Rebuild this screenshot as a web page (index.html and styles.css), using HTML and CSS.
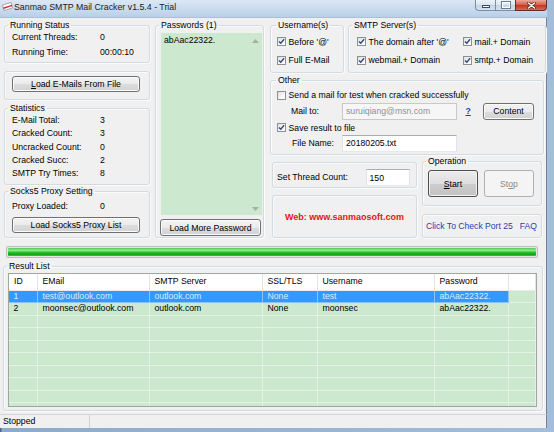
FILE: index.html
```html
<!DOCTYPE html>
<html>
<head>
<meta charset="utf-8">
<title>Sanmao SMTP Mail Cracker</title>
<link rel="stylesheet" href="styles.css">
</head>
<body>
<svg class="defs" width="0" height="0" aria-hidden="true">
  <defs>
    <symbol id="tick" viewBox="0 0 7 7"><path d="M1 3.4 L2.8 5.3 L6.1 1.2" fill="none" stroke="#2f4a7e" stroke-width="1.4"/></symbol>
  </defs>
</svg>
<div class="window">
  <div class="titlebar">
    <svg class="appicon" width="11" height="9" viewBox="0 0 11 9"><path d="M0.5 3 L9 0.5 L10.5 6 L2 8.5 Z" fill="#fff" stroke="#8a8a8a" stroke-width="0.7"/><path d="M1.2 5.4 L10 2.7 L10.3 4.1 L1.6 6.9 Z" fill="#d42a2a"/></svg>
    <span class="title">Sanmao SMTP Mail Cracker v1.5.4 - Trial</span>
    <div class="caption">
      <span class="cbtn min"><span class="g-min"></span></span>
      <span class="cbtn max"><span class="g-max"></span></span>
      <span class="cbtn close"><svg width="9" height="7" viewBox="0 0 9 7"><path d="M1.5 1 L7.5 6 M7.5 1 L1.5 6" stroke="#5a1f1a" stroke-width="2.8" stroke-linecap="round"/><path d="M1.5 1 L7.5 6 M7.5 1 L1.5 6" stroke="#fff" stroke-width="1.5" stroke-linecap="round"/></svg></span>
    </div>
  </div>
  <div class="client">
    <div class="top">
      <div class="col-left">
        <fieldset class="grp running">
          <legend>Running Status</legend>
          <div class="kv r145"><span class="k">Current Threads:</span><span>0</span></div>
          <div class="kv r145"><span class="k">Running Time:</span><span>00:00:10</span></div>
        </fieldset>
        <div class="box loadbox"><button class="btn wide"><u>L</u>oad E-Mails From File</button></div>
        <fieldset class="grp stats">
          <legend>Statistics</legend>
          <div class="statrows">
            <div class="kv r134"><span class="k">E-Mail Total:</span><span>3</span></div>
            <div class="kv r134"><span class="k">Cracked Count:</span><span>3</span></div>
            <div class="kv r134"><span class="k">Uncracked Count:</span><span>0</span></div>
            <div class="kv r134"><span class="k">Cracked Succ:</span><span>2</span></div>
            <div class="kv r134"><span class="k">SMTP Try Times:</span><span>8</span></div>
          </div>
        </fieldset>
        <fieldset class="grp socks">
          <legend>Socks5 Proxy Setting</legend>
          <div class="kv r14 proxyrow"><span class="k">Proxy Loaded:</span><span>0</span></div>
          <button class="btn wide proxybtn">Load Socks5 Proxy List</button>
        </fieldset>
      </div>

      <fieldset class="grp passwords">
        <legend>Passwords (1)</legend>
        <div class="pwlist">
          <div class="pwtext">abAac22322.</div>
          <div class="vscroll">
            <svg width="7" height="4" viewBox="0 0 7 4"><path d="M0 4 L3.5 0 L7 4 Z" fill="#a8aea8"/></svg>
            <svg width="7" height="4" viewBox="0 0 7 4"><path d="M0 0 L3.5 4 L7 0 Z" fill="#a8aea8"/></svg>
          </div>
        </div>
        <button class="btn pwbtn">Load More Password</button>
      </fieldset>

      <div class="col-right">
        <div class="row-top">
          <fieldset class="grp user">
            <legend>Username(s)</legend>
            <div class="chkrows">
              <div class="chk"><span class="cb"><svg><use href="#tick"/></svg></span><span>Before '@'</span></div>
              <div class="chk"><span class="cb"><svg><use href="#tick"/></svg></span><span>Full E-Mail</span></div>
            </div>
          </fieldset>
          <fieldset class="grp smtp">
            <legend>SMTP Server(s)</legend>
            <div class="chkgrid">
              <div class="chk"><span class="cb"><svg><use href="#tick"/></svg></span><span>The domain after '@'</span></div>
              <div class="chk"><span class="cb"><svg><use href="#tick"/></svg></span><span>mail.+ Domain</span></div>
              <div class="chk"><span class="cb"><svg><use href="#tick"/></svg></span><span>webmail.+ Domain</span></div>
              <div class="chk"><span class="cb"><svg><use href="#tick"/></svg></span><span>smtp.+ Domain</span></div>
            </div>
          </fieldset>
        </div>

        <fieldset class="grp other">
          <legend>Other</legend>
          <div class="chk sendrow"><span class="cb off"></span><span>Send a mail for test when cracked successfully</span></div>
          <div class="field mailrow">
            <span class="flabel">Mail to:</span>
            <span class="input disabled w115">suruiqiang@msn.com</span>
            <a class="help">?</a>
            <button class="btn content">Content</button>
          </div>
          <div class="chk saverow"><span class="cb"><svg><use href="#tick"/></svg></span><span>Save result to file</span></div>
          <div class="field filerow">
            <span class="flabel">File Name:</span>
            <span class="input w115">20180205.txt</span>
          </div>
        </fieldset>

        <div class="lower">
          <div class="sub-left">
            <div class="box thread">
              <span class="tlabel">Set Thread Count:</span>
              <span class="input w44 num">150</span>
            </div>
            <div class="box web"><span class="weblink">Web: www.sanmaosoft.com</span></div>
          </div>
          <div class="sub-right">
            <fieldset class="grp oper">
              <legend>Operation</legend>
              <div class="opbtns">
                <button class="btn big start"><u>S</u>tart</button>
                <button class="btn big stop">St<u>o</u>p</button>
              </div>
            </fieldset>
            <div class="box port"><span class="blue">Click To Check Port 25</span><span class="blue faq">FAQ</span></div>
          </div>
        </div>
      </div>
    </div>

    <div class="progress"><div class="fill"></div></div>

    <fieldset class="grp result">
      <legend>Result List</legend>
      <div class="table">
        <div class="tr head">
          <span class="td idc">ID</span><span class="td">EMail</span><span class="td">SMTP Server</span><span class="td">SSL/TLS</span><span class="td">Username</span><span class="td">Password</span><span class="td"></span>
        </div>
        <div class="tr sel">
          <span class="td">1</span><span class="td">test@outlook.com</span><span class="td">outlook.com</span><span class="td">None</span><span class="td">test</span><span class="td">abAac22322.</span><span class="td"></span>
        </div>
        <div class="tr">
          <span class="td">2</span><span class="td">moonsec@outlook.com</span><span class="td">outlook.com</span><span class="td">None</span><span class="td">moonsec</span><span class="td">abAac22322.</span><span class="td"></span>
        </div>
        <div class="tr"><span class="td"></span><span class="td"></span><span class="td"></span><span class="td"></span><span class="td"></span><span class="td"></span><span class="td"></span></div>
        <div class="tr"><span class="td"></span><span class="td"></span><span class="td"></span><span class="td"></span><span class="td"></span><span class="td"></span><span class="td"></span></div>
        <div class="tr"><span class="td"></span><span class="td"></span><span class="td"></span><span class="td"></span><span class="td"></span><span class="td"></span><span class="td"></span></div>
        <div class="tr"><span class="td"></span><span class="td"></span><span class="td"></span><span class="td"></span><span class="td"></span><span class="td"></span><span class="td"></span></div>
        <div class="tr"><span class="td"></span><span class="td"></span><span class="td"></span><span class="td"></span><span class="td"></span><span class="td"></span><span class="td"></span></div>
        <div class="tr"><span class="td"></span><span class="td"></span><span class="td"></span><span class="td"></span><span class="td"></span><span class="td"></span><span class="td"></span></div>
        <div class="tr"><span class="td"></span><span class="td"></span><span class="td"></span><span class="td"></span><span class="td"></span><span class="td"></span><span class="td"></span></div>
        <div class="tr"><span class="td"></span><span class="td"></span><span class="td"></span><span class="td"></span><span class="td"></span><span class="td"></span><span class="td"></span></div>
      </div>
    </fieldset>
  </div>
  <div class="statusbar"><span class="panel first">Stopped</span><span class="panel rest"></span></div>
</div>
</body>
</html>
```

FILE: styles.css
```css
* { box-sizing: border-box; }
html, body { margin: 0; padding: 0; }
body {
  width: 554px; height: 432px; overflow: hidden;
  font-family: "Liberation Sans", Arial, sans-serif;
  font-size: 8.7px; color: #000;
  background: #a9c2dd;
}
.defs { position: absolute; width: 0; height: 0; }

.window {
  width: 554px; height: 432px;
  display: flex; flex-direction: column;
  padding: 0 7px 4px 0;
  background: linear-gradient(90deg, #50698a 0, #50698a 1px, #8eaacb 2px, #a3bddb 100%);
}

/* title bar */
.titlebar {
  height: 17px; flex: none;
  display: flex; align-items: flex-start;
  background: linear-gradient(180deg, #dce7f4 0%, #c9dbee 55%, #b9cfe8 100%);
}
.appicon { margin: 2px 0 0 2px; flex: none; }
.title { margin-left: 1px; font-size: 8.8px; line-height: 10px; padding-top: 2px; color: #1a1a1a; }
.caption { margin-left: auto; display: flex; height: 11px; }
.cbtn { height: 11px; display: flex; align-items: center; justify-content: center; }
.cbtn.min, .cbtn.max {
  width: 20px;
  background: linear-gradient(180deg, #eef3f9 0%, #d9e4f0 50%, #c4d4e6 51%, #d3e1ef 100%);
  border: 1px solid #7c8ea6; border-top: none;
}
.cbtn.min { border-bottom-left-radius: 4px; border-right: none; }
.cbtn.max { border-right: none; }
.g-min { width: 8px; height: 3px; background: #fff; border: 1px solid #3f4a5a; margin-top: 3px; }
.g-max { width: 8px; height: 6px; border: 1px solid #fff; outline: 1px solid #6d7a8c; background: transparent; }
.cbtn.close {
  width: 32px;
  background: linear-gradient(180deg, #e9a899 0%, #d8634f 45%, #c4391f 55%, #d36a58 100%);
  border: 1px solid #6b2b24; border-top: none;
  border-bottom-right-radius: 4px;
}

/* client */
.client {
  height: 397px; flex: none;
  background: #f0f0f0;
  border-top: 1px solid #aebfd2;
  border-right: 1px solid #6f849c;
  display: flex; flex-direction: column;
}
.top { height: 226px; flex: none; display: flex; align-items: flex-start; padding-left: 4px; }

/* group boxes */
.grp {
  margin: 0; padding: 0; min-width: 0;
  border: 1px solid #d3dbe0; border-radius: 3px;
  box-shadow: 1px 1px 0 #fbfbfb, inset 1px 1px 0 #fbfbfb;
}
.grp > legend {
  padding: 0 2px; margin-left: 3px;
  line-height: 9px; height: 9px;
}
.box { border: 1px solid #d3dbe0; border-radius: 3px; box-shadow: 1px 1px 0 #fbfbfb, inset 1px 1px 0 #fbfbfb; }

/* left column */
.col-left { width: 146px; flex: none; margin-top: 3px; display: flex; flex-direction: column; }
.kv { display: flex; padding-left: 7px; }
.kv .k { width: 88px; flex: none; }
.r145 { line-height: 14.5px; }
.r134 { line-height: 13.4px; }
.r14 { line-height: 14px; }
.running { padding-bottom: 3px; }
.loadbox { margin-top: 8px; height: 29px; padding: 4px 0 0 7px; }
.btn {
  font: inherit; color: #000;
  border: 1px solid #707070; border-radius: 3px;
  background: linear-gradient(180deg, #f3f3f3 0%, #ebebeb 50%, #dddddd 51%, #d2d2d2 100%);
  box-shadow: inset 0 0 0 1px #fbfbfb;
  padding: 0; margin: 0;
  display: flex; align-items: center; justify-content: center;
  white-space: nowrap;
}
.btn.wide { width: 128px; height: 16px; }
.stats { margin-top: 3.5px; padding-bottom: 3px; }
.statrows { padding-top: 1.3px; }
.socks { margin-top: 2.5px; padding: 0 0 4px 7px; }
.socks > legend { margin-left: -4px; }
.socks .kv { padding-left: 0; }
.proxyrow { margin-top: 3px; }
.proxybtn { margin-top: 4px; }

/* passwords */
.passwords { width: 109px; flex: none; margin-left: 5px; margin-top: 2.5px; padding: 0 1px 1px 5px; }
.passwords > legend { margin-left: -2px; }
.pwlist { margin-top: 3px; width: 101px; height: 182.5px; background: #cce8cf; display: flex; }
.pwtext { flex: 1; padding: 2px 0 0 3px; line-height: 11px; }
.vscroll { width: 13px; display: flex; flex-direction: column; justify-content: space-between; align-items: center; padding: 6px 0 4px 0; }
.pwbtn { margin-top: 4px; margin-left: -1px; width: 101px; height: 17px; }

/* right column */
.col-right { width: 276px; flex: none; margin-left: 6px; margin-top: 2.5px; display: flex; flex-direction: column; }
.row-top { display: flex; }
.user { width: 74px; flex: none; padding: 0 0 2.4px 6px; }
.user > legend { margin-left: -1px; }
.smtp { width: 198px; flex: none; margin-left: 4px; padding: 0 0 2.4px 8px; }
.smtp > legend { margin-left: -5px; }
.chkrows { margin-top: 3px; }
.chk { display: flex; align-items: center; height: 18.4px; white-space: nowrap; }
.chkgrid { margin-top: 3px; display: grid; grid-template-columns: 106px 1fr; }
.cb {
  width: 9px; height: 9px; flex: none;
  border: 1px solid #8e8f8f;
  background: linear-gradient(135deg, #dedede 0%, #f7f7f7 60%, #ffffff 100%);
  display: flex; align-items: center; justify-content: center;
  margin-right: 2.5px;
}
.cb svg { width: 7px; height: 7px; }

.other { width: 274px; margin-top: 3.8px; padding: 0 0 2px 6px; }
.other > legend { margin-left: -1px; }
.sendrow { margin-top: 3px; height: 14px; }
.field { display: flex; align-items: center; height: 17px; }
.mailrow { margin-top: 0.5px; margin-left: 14px; }
.filerow { margin-left: 15px; }
.mailrow .flabel { width: 51px; flex: none; }
.filerow .flabel { width: 50px; flex: none; }
.saverow { margin-top: 1px; height: 14px; }
.input {
  height: 17px; display: flex; align-items: center; flex: none;
  padding-left: 3px; white-space: nowrap; overflow: hidden;
  background: #fff;
  border: 1px solid #e2e3ea; border-top-color: #abadb3; border-bottom-color: #e3e9ef;
}
.input.disabled { background: #f6f6f6; border-color: #c9c9c9; color: #8f8f8f; }
.w115 { width: 115px; }
.w44 { width: 44px; }
.input.num { padding-left: 2.5px; }
.help { margin-left: 8.5px; width: 6px; color: #1a3dc1; font-weight: bold; text-decoration: underline; }
.btn.content { margin-left: 11.5px; width: 51px; height: 17px; }

.lower { display: flex; margin-top: 2.5px; }
.sub-left { width: 145px; flex: none; margin-left: 2px; display: flex; flex-direction: column; }
.thread { margin-top: 5px; height: 26px; display: flex; align-items: flex-start; padding: 6px 0 0 4px; }
.tlabel { width: 89px; flex: none; line-height: 17px; white-space: nowrap; }
.web { margin-top: 7px; height: 43px; display: flex; align-items: center; justify-content: center; }
.weblink { color: #e3141b; font-weight: bold; font-size: 9px; }
.sub-right { width: 120px; flex: none; margin-left: 5px; display: flex; flex-direction: column; }
.oper { padding: 0 0 8px 5px; }
.oper > legend { margin-left: -2px; }
.opbtns { display: flex; margin-top: 4px; gap: 6px; }
.btn.big { width: 50px; height: 27px; }
.btn.start {
  border-color: #4f4f4f;
  background: linear-gradient(180deg, #ececec 0%, #dedede 50%, #cdcdcd 51%, #c2c2c2 100%);
  box-shadow: inset 0 0 0 1px #f2f2f2;
}
.btn.stop {
  border-color: #adb2b5; color: #8a8a8a;
  background: #f4f4f4; box-shadow: none;
}
.port { margin-top: 8px; height: 24px; display: flex; align-items: center; padding: 0 4px 0 3px; font-size: 8.6px; white-space: nowrap; }
.blue { color: #2c3cb0; }
.faq { margin-left: auto; }

/* progress */
.progress {
  margin: 2px 0 0 6px; width: 532px; height: 12px; flex: none;
  border: 1px solid #bcbcbc; border-radius: 2px;
  background: #e6e6e6; padding: 1px;
}
.progress .fill {
  height: 100%; width: 100%; border-radius: 1px;
  background: linear-gradient(180deg, #4fcb4f 0%, #8fe88f 30%, #2cc12c 55%, #0fa50f 80%, #3ac43a 100%);
}

/* result list */
.result { width: 540px; margin: 3.5px 0 0 3px; padding: 0 0 3px 4px; flex: none; }
.result > legend { margin-left: -1px; }
.table {
  margin-top: 2.5px; width: 529px; height: 133.5px; overflow: hidden;
  border: 1px solid #9fa79f;
  background: #cce8cf;
}
.tr { display: grid; grid-template-columns: 29px 112px 113px 55px 117px 74px 1fr; }
.td {
  height: 12.5px; line-height: 11.5px;
  padding-left: 4.5px; white-space: nowrap; overflow: hidden;
  border-right: 1px solid #e4f2e5; border-bottom: 1px solid #e4f2e5;
}
.tr.head .td {
  height: 16.5px; line-height: 15.5px;
  background: #fff;
  border-right: 1px solid #e3e3e3; border-bottom: 1px solid #eaeaea;
}
.tr.head .idc { padding-left: 5px; }
.tr.sel .td { background: #3399ff; color: #dcecff; border-right-color: #8cc3f5; border-bottom-color: #8cc3f5; }
.tr.sel .td:last-child { background: transparent; border-right-color: #e4f2e5; border-bottom-color: #e4f2e5; }

/* status bar */
.statusbar {
  height: 14px; flex: none;
  background: #f0f0f0;
  border-top: 1px solid #d5d5d5;
  border-right: 1px solid #6f849c;
  display: flex;
}
.panel { line-height: 13px; }
.panel.first { width: 90px; padding-left: 3px; border-right: 1px solid #d2d2d2; }
.panel.rest { flex: 1; }
```
